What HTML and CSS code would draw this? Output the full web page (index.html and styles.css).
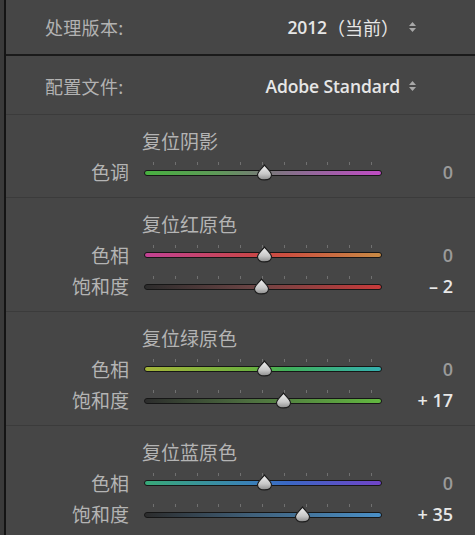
FILE: index.html
```html
<!DOCTYPE html>
<html lang="zh-CN">
<head>
<meta charset="utf-8">
<title>基本</title>
<link rel="stylesheet" href="styles.css">
</head>
<body>
<div class="frame">
  <div class="edge"></div>
  <div class="panel">
    <div class="setting first">
      <span class="slabel">处理版本:</span>
      <span class="svalue">2012<span class="cjk">（当前）</span><svg class="updown gap" viewBox="0 0 9 12" width="9" height="12"><path d="M1 5 L4.5 1 L8 5 Z M1 7 L4.5 11 L8 7 Z"/></svg></span>
    </div>
    <div class="setting second">
      <span class="slabel">配置文件:</span>
      <span class="svalue">Adobe Standard<svg class="updown" viewBox="0 0 9 12" width="9" height="12"><path d="M1 5 L4.5 1 L8 5 Z M1 7 L4.5 11 L8 7 Z"/></svg></span>
    </div>

    <section class="group">
      <div class="gtitle">复位阴影</div>
      <div class="srow">
        <span class="rlabel">色调</span>
        <div class="slider">
          <div class="ticks"><i></i><i></i><i></i><i></i><i></i><i></i><i></i><i></i><i></i><i></i><i></i></div>
          <div class="track t-tint"></div>
          <svg class="thumb" style="left:50.5%" viewBox="0 0 16 16" width="17" height="17"><use href="#thumbshape"/></svg>
        </div>
        <span class="rvalue zero">0</span>
      </div>
    </section>

    <section class="group">
      <div class="gtitle">复位红原色</div>
      <div class="srow">
        <span class="rlabel">色相</span>
        <div class="slider">
          <div class="ticks"><i></i><i></i><i></i><i></i><i></i><i></i><i></i><i></i><i></i><i></i><i></i></div>
          <div class="track t-rh"></div>
          <svg class="thumb" style="left:50.5%" viewBox="0 0 16 16" width="17" height="17"><use href="#thumbshape"/></svg>
        </div>
        <span class="rvalue zero">0</span>
      </div>
      <div class="srow">
        <span class="rlabel">饱和度</span>
        <div class="slider">
          <div class="ticks"><i></i><i></i><i></i><i></i><i></i><i></i><i></i><i></i><i></i><i></i><i></i></div>
          <div class="track t-rs"></div>
          <svg class="thumb" style="left:49.5%" viewBox="0 0 16 16" width="17" height="17"><use href="#thumbshape"/></svg>
        </div>
        <span class="rvalue">– 2</span>
      </div>
    </section>

    <section class="group">
      <div class="gtitle">复位绿原色</div>
      <div class="srow">
        <span class="rlabel">色相</span>
        <div class="slider">
          <div class="ticks"><i></i><i></i><i></i><i></i><i></i><i></i><i></i><i></i><i></i><i></i><i></i></div>
          <div class="track t-gh"></div>
          <svg class="thumb" style="left:50.5%" viewBox="0 0 16 16" width="17" height="17"><use href="#thumbshape"/></svg>
        </div>
        <span class="rvalue zero">0</span>
      </div>
      <div class="srow">
        <span class="rlabel">饱和度</span>
        <div class="slider">
          <div class="ticks"><i></i><i></i><i></i><i></i><i></i><i></i><i></i><i></i><i></i><i></i><i></i></div>
          <div class="track t-gs"></div>
          <svg class="thumb" style="left:58.5%" viewBox="0 0 16 16" width="17" height="17"><use href="#thumbshape"/></svg>
        </div>
        <span class="rvalue">+ 17</span>
      </div>
    </section>

    <section class="group">
      <div class="gtitle">复位蓝原色</div>
      <div class="srow">
        <span class="rlabel">色相</span>
        <div class="slider">
          <div class="ticks"><i></i><i></i><i></i><i></i><i></i><i></i><i></i><i></i><i></i><i></i><i></i></div>
          <div class="track t-bh"></div>
          <svg class="thumb" style="left:50.5%" viewBox="0 0 16 16" width="17" height="17"><use href="#thumbshape"/></svg>
        </div>
        <span class="rvalue zero">0</span>
      </div>
      <div class="srow">
        <span class="rlabel">饱和度</span>
        <div class="slider">
          <div class="ticks"><i></i><i></i><i></i><i></i><i></i><i></i><i></i><i></i><i></i><i></i><i></i></div>
          <div class="track t-bs"></div>
          <svg class="thumb" style="left:66.5%" viewBox="0 0 16 16" width="17" height="17"><use href="#thumbshape"/></svg>
        </div>
        <span class="rvalue">+ 35</span>
      </div>
    </section>
  </div>
</div>

<svg class="defs" width="0" height="0" aria-hidden="true">
  <defs>
    <linearGradient id="thumbfill" x1="0" y1="0" x2="0" y2="1">
      <stop offset="0" stop-color="#f0f0f0"/>
      <stop offset="0.6" stop-color="#c8c8c8"/>
      <stop offset="1" stop-color="#8c8c8c"/>
    </linearGradient>
    <symbol id="thumbshape" viewBox="0 0 16 16">
      <path d="M8 1 C9 2.6 14.6 7.4 14.6 10.2 C14.6 13.4 11.8 15 8 15 C4.2 15 1.4 13.4 1.4 10.2 C1.4 7.4 7 2.6 8 1 Z" fill="url(#thumbfill)" stroke="#1c1c1c" stroke-width="1.1"/>
    </symbol>
  </defs>
</svg>
</body>
</html>
```

FILE: styles.css
```css
* { box-sizing: border-box; }

html, body {
  margin: 0;
  padding: 0;
  background: #464646;
}

body {
  width: 475px;
  height: 535px;
  overflow: hidden;
  font-family: "Noto Sans CJK SC", "Noto Sans", sans-serif;
  color: #b4b4b4;
}

.frame {
  display: flex;
  height: 535px;
}

.edge {
  width: 6px;
  flex: none;
  background: #3a3a3a;
  border-right: 2px solid #141414;
}

.panel {
  flex: 1;
  background: #464646;
}

.setting {
  display: flex;
  align-items: center;
  justify-content: space-between;
  padding: 0 58px 0 39px;
  font-size: 18px;
}

.setting.first {
  height: 56px;
  border-bottom: 2px solid #1a1a1a;
}

.setting.second {
  height: 58px;
  padding-top: 1px;
}

.slabel {
  color: #b2b2b2;
  letter-spacing: 0.3px;
}

.svalue {
  display: flex;
  align-items: center;
  color: #e6e6e6;
  font-family: "Open Sans", "Noto Sans CJK SC", sans-serif;
  font-size: 17.5px;
  font-weight: 600;
  letter-spacing: -0.1px;
}

.svalue .cjk {
  font-family: "Noto Sans CJK SC", sans-serif;
  font-weight: 400;
  font-size: 18px;
  letter-spacing: 0;
}

.svalue .updown {
  margin-left: 8px;
}

.svalue .updown.gap {
  margin-left: 9px;
}

.updown path {
  fill: #a8a8a8;
}

.group {
  border-top: 1px solid #3b3b3b;
  padding: 14px 0 8.5px;
}

.gtitle {
  padding-left: 136px;
  font-size: 19px;
  line-height: 24px;
  color: #b4b4b4;
  margin-bottom: 3.5px;
}

.srow {
  display: grid;
  grid-template-columns: 123px 238px 1fr;
  column-gap: 15px;
  align-items: center;
  height: 31.5px;
  padding-right: 22px;
}

.rlabel {
  text-align: right;
  font-size: 19px;
  line-height: 24px;
  color: #b4b4b4;
}

.rvalue {
  text-align: right;
  font-family: "Open Sans", sans-serif;
  font-size: 18px;
  font-weight: 600;
  color: #e8e8e8;
  margin-left: -15px;
}

.rvalue.zero {
  color: #9a9a9a;
}

.slider {
  position: relative;
  height: 31.5px;
}

.ticks {
  position: absolute;
  left: 9px;
  right: 10px;
  top: 5.5px;
  display: flex;
  justify-content: space-between;
}

.ticks i {
  display: block;
  width: 1px;
  height: 3px;
  background: #707070;
}

.track {
  position: absolute;
  left: 0;
  right: 0;
  top: 13px;
  height: 6px;
  border: 1px solid #161616;
  border-radius: 3px;
}

.t-tint { background: linear-gradient(to right, #48b040, #5e9a58 30%, #767a76 50%, #93689a 70%, #c04cc4); }
.t-rh   { background: linear-gradient(to right, #c24294, #c8464a 45%, #cc5040 60%, #c88a44); }
.t-rs   { background: linear-gradient(to right, #2c2c2c, #6a4444 45%, #c83a3a); }
.t-gh   { background: linear-gradient(to right, #a4b43a, #6cb03e 45%, #40b05a 60%, #34b0b0); }
.t-gs   { background: linear-gradient(to right, #2c2c2c, #4e7040 45%, #62b840); }
.t-bh   { background: linear-gradient(to right, #38a878, #3a80b8 45%, #3a68c4 60%, #7044c8); }
.t-bs   { background: linear-gradient(to right, #2c2c2c, #40607a 45%, #4a90c8); }

.thumb {
  position: absolute;
  top: 7px;
  margin-left: -8.5px;
}

.defs {
  position: absolute;
  width: 0;
  height: 0;
}
```
